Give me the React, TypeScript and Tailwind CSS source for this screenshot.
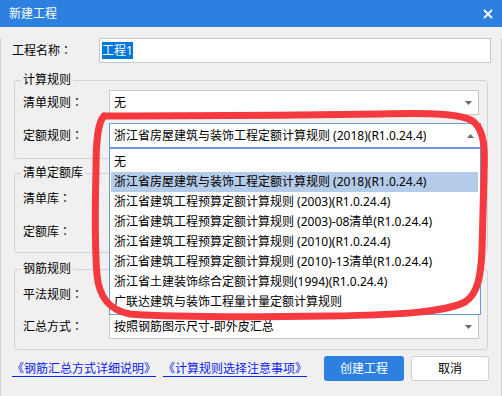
import React from 'react'

const ruleOptions = [
  '无',
  '浙江省房屋建筑与装饰工程定额计算规则 (2018)(R1.0.24.4)',
  '浙江省建筑工程预算定额计算规则 (2003)(R1.0.24.4)',
  '浙江省建筑工程预算定额计算规则 (2003)-08清单(R1.0.24.4)',
  '浙江省建筑工程预算定额计算规则 (2010)(R1.0.24.4)',
  '浙江省建筑工程预算定额计算规则 (2010)-13清单(R1.0.24.4)',
  '浙江省土建装饰综合定额计算规则(1994)(R1.0.24.4)',
  '广联达建筑与装饰工程量计量定额计算规则',
]

function Arrow({ up }: { up?: boolean }) {
  return (
    <svg width="7" height="4" viewBox="0 0 7 4" className="shrink-0">
      {up ? <path d="M0 4 L3.5 0 L7 4 Z" fill="#6b6b6b" /> : <path d="M0 0 L7 0 L3.5 4 Z" fill="#6b6b6b" />}
    </svg>
  )
}

function Combo({ text, open }: { text?: string; open?: boolean }) {
  return (
    <div
      className={`flex h-[25px] w-[372px] items-center justify-between border bg-white pl-[4px] pr-[6px] ${
        open ? 'border-[#6a9ad9]' : 'border-[#c9c9c9]'
      }`}
    >
      <span className="truncate">{text}</span>
      <Arrow up={open} />
    </div>
  )
}

// 冒号用 TC 字形，居中显示
function Label({ text, className }: { text: string; className: string }) {
  return (
    <span className={`shrink-0 ${className}`}>
      {text}
      <span className="font-['Noto_Sans_CJK_TC',sans-serif]">：</span>
    </span>
  )
}

function Row({ label, children }: { label: string; children: React.ReactNode }) {
  return (
    <div className="flex h-[25px] items-center">
      <Label text={label} className="w-[86px]" />
      {children}
    </div>
  )
}

function Group({
  title,
  className,
  children,
}: {
  title: string
  className: string
  children: React.ReactNode
}) {
  return (
    <div className={`mx-[13px] rounded-[3px] border border-[#d4d4d4] px-[8px] ${className}`}>
      <div className="-mt-[9px] -ml-[2px] h-[16px] w-fit bg-[#f0f0f0] px-[2px] leading-[16px]">{title}</div>
      {children}
    </div>
  )
}

export default function App() {
  return (
    <div className="relative h-[396px] w-[502px] overflow-hidden bg-[#f0f0f0] font-['Noto_Sans','Noto_Sans_CJK_SC',sans-serif] text-[12px] leading-[16px] text-black">
      {/* 标题栏 */}
      <div className="flex h-[27px] items-center justify-between bg-[#2d7fe0] pl-[9px] pr-[9px] text-[12px] text-white">
        <span>新建工程</span>
        <svg width="10" height="10" viewBox="0 0 10 10">
          <path d="M1 1 L9 9 M9 1 L1 9" stroke="white" strokeWidth="1.8" />
        </svg>
      </div>

      <div className="h-[369px] border-x border-b border-[#cfcfcf]">
        {/* 工程名称 */}
        <div className="ml-[11px] mt-[11px] flex h-[25px] items-center">
          <Label text="工程名称" className="w-[87px]" />
          <div className="flex h-[25px] w-[392px] items-center border border-[#c6c8cc] bg-white pl-[2px]">
            <span className="h-[17px] bg-[#0078d7] leading-[17px] text-white">工程1</span>
          </div>
        </div>

        <Group title="计算规则" className="mt-[17px]">
          <div className="mt-[2px] flex flex-col gap-[8px] pb-[10px]">
            <Row label="清单规则">
              <Combo text="无" />
            </Row>
            <Row label="定额规则">
              <div className="relative">
                <Combo text={ruleOptions[1]} open />
                <div className="absolute left-0 top-full z-10 w-[372px] border border-[#6a9ad9] bg-white px-[1px] pb-[2px] pt-[3px]">
                  {ruleOptions.map((opt, i) => (
                    <div
                      key={opt}
                      className={`h-[20px] pl-[3px] leading-[20px] ${i === 1 ? 'mr-[1px] bg-[#b4cbe9]' : ''}`}
                    >
                      {opt}
                    </div>
                  ))}
                </div>
              </div>
            </Row>
          </div>
        </Group>

        <Group title="清单定额库" className="mt-[14px]">
          <div className="mt-[5px] flex flex-col gap-[8px] pb-[8px]">
            <Row label="清单库">
              <Combo />
            </Row>
            <Row label="定额库">
              <Combo />
            </Row>
          </div>
        </Group>

        <Group title="钢筋规则" className="mt-[16px]">
          <div className="mt-[5px] flex flex-col gap-[7px] pb-[10px]">
            <Row label="平法规则">
              <Combo />
            </Row>
            <Row label="汇总方式">
              <Combo text="按照钢筋图示尺寸-即外皮汇总" />
            </Row>
          </div>
        </Group>

        {/* 底部 */}
        <div className="mt-[6px] flex items-center justify-between pl-[11px] pr-[12px]">
          <div className="flex gap-[7px] text-[#0a22f0] underline underline-offset-[3px]">
            <span>《钢筋汇总方式详细说明》</span>
            <span>《计算规则选择注意事项》</span>
          </div>
          <div className="flex gap-[7px]">
            <button className="h-[25px] w-[80px] rounded-[3px] bg-[#2d7fe0] text-white">创建工程</button>
            <button className="h-[25px] w-[78px] rounded-[3px] border border-[#cfcfcf] bg-white">取消</button>
          </div>
        </div>
      </div>

      {/* 红色圈注 */}
      <svg className="pointer-events-none absolute inset-0 z-20" width="502" height="396" viewBox="0 0 502 396">
        <path
          d="M104 116 C98 122, 96 140, 96 170 C95 210, 95 250, 97 275 C99 296, 108 310, 130 314 C170 317, 260 317, 330 316 C400 315, 445 312, 465 302 C478 294, 481 275, 482 250 L484 175 C485 150, 485 132, 474 122 C462 113, 430 113, 380 114 C300 115, 200 116, 130 116 C118 116, 110 116, 104 116"
          fill="none"
          stroke="#f53a3f"
          strokeWidth="7"
          strokeLinecap="round"
          strokeLinejoin="round"
        />
      </svg>
    </div>
  )
}
